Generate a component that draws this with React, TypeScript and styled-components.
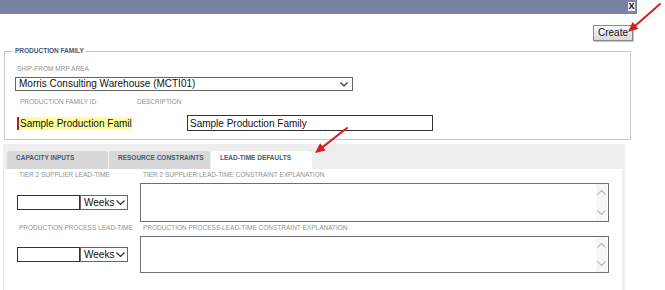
import styled, { createGlobalStyle } from "styled-components";

const GlobalStyle = createGlobalStyle`
  html, body {
    margin: 0;
    padding: 0;
    background: #fff;
  }
  * {
    box-sizing: border-box;
  }
`;

const Page = styled.div`
  position: relative;
  width: 665px;
  height: 290px;
  overflow: hidden;
  background: #fff;
  font-family: "Liberation Sans", Arial, sans-serif;
`;

const TitleBar = styled.div`
  width: 637px;
  height: 14px;
  background: #7882a4;
  display: flex;
  justify-content: flex-end;
  align-items: flex-start;
  padding: 1px 1px 0 0;
`;

const CloseBox = styled.div`
  width: 9px;
  height: 11px;
  background: #ececec;
  border: 1px solid #8a8a8a;
  color: #111;
  font-size: 9px;
  font-weight: bold;
  line-height: 9px;
  text-align: center;
`;

const Toolbar = styled.div`
  display: flex;
  justify-content: flex-end;
  padding-right: 32px;
  margin-top: 11px;
`;

const CreateButton = styled.button`
  height: 16px;
  padding: 0 4px;
  font-family: "Liberation Sans", Arial, sans-serif;
  font-size: 10px;
  line-height: 14px;
  color: #111;
  border: 1px solid #888;
  background: linear-gradient(#fbfbfb, #d9d9d9);
  box-shadow: 1px 1px 0 #c4c4c4;
`;

const Fieldset = styled.fieldset`
  margin: 6px 0 0 4px;
  width: 627px;
  border: 1px solid #c9c9c9;
  padding: 0;
  min-width: 0;
`;

const Legend = styled.legend`
  margin-left: 8px;
  padding: 0 2px;
  font-size: 6.5px;
  line-height: 8px;
  font-weight: bold;
  color: #3f5573;
`;

const FieldsetBody = styled.div`
  padding: 10px 0 8px 10px;
`;

const SmallLabel = styled.div<{ $indent?: number; $width?: number; $top?: number }>`
  font-size: 6.5px;
  line-height: 8px;
  color: #929292;
  white-space: nowrap;
  padding-left: ${(p) => p.$indent ?? 0}px;
  margin-top: ${(p) => p.$top ?? 0}px;
  width: ${(p) => (p.$width ? `${p.$width}px` : "auto")};
  flex-shrink: 0;
`;

const Combo = styled.div<{ $width: number; $height: number; $chevronRight: number }>`
  width: ${(p) => p.$width}px;
  height: ${(p) => p.$height}px;
  border: 1px solid #666;
  background: #fff;
  flex-shrink: 0;
  display: flex;
  align-items: center;
  justify-content: space-between;
  padding: 0 ${(p) => p.$chevronRight}px 0 3px;
  font-size: 10px;
  line-height: 12px;
  color: #111;
  white-space: nowrap;
`;

const ComboRow = styled.div`
  margin-top: 4px;
`;

const LabelRow = styled.div`
  display: flex;
  margin-top: 7px;
`;

const InputRow = styled.div`
  display: flex;
  align-items: center;
  margin-top: 9px;
  height: 16px;
`;

const RequiredInput = styled.input`
  margin-left: 2px;
  width: 115px;
  height: 13px;
  border: none;
  border-left: 2px solid #a3222a;
  background: #ffff99;
  padding: 0 0 0 1px;
  font-family: "Liberation Sans", Arial, sans-serif;
  font-size: 10px;
  color: #111;
  outline: none;
`;

const TextInput = styled.input<{ $width: number; $height: number; $left?: number }>`
  margin-left: ${(p) => p.$left ?? 0}px;
  width: ${(p) => p.$width}px;
  height: ${(p) => p.$height}px;
  border: 1px solid #333;
  background: #fff;
  padding: 0 0 0 2px;
  font-family: "Liberation Sans", Arial, sans-serif;
  font-size: 10px;
  color: #111;
  outline: none;
  flex-shrink: 0;
`;

const Tabs = styled.div`
  margin: 4px 0 0 3px;
  width: 622px;
`;

const TabBar = styled.div`
  height: 25px;
  background: #eeeeee;
  display: flex;
  align-items: flex-end;
  gap: 1px;
  padding-left: 4px;
`;

const Tab = styled.div<{ $active?: boolean }>`
  width: 101px;
  height: 18px;
  padding: 3px 0 0 9px;
  background: ${(p) => (p.$active ? "#fff" : "#d8d8d8")};
  border-radius: 3px 3px 0 0;
  font-size: 6.5px;
  line-height: 8px;
  font-weight: bold;
  color: #4a5a70;
  white-space: nowrap;
`;

const Panel = styled.div`
  height: 121px;
  background: #fff;
  border-left: 1px solid #e2e2e2;
  border-right: 3px solid #eeeeee;
  padding-left: 13px;
  display: grid;
  grid-template-columns: 123px 469px;
  grid-template-rows: 14px 39px 14px 37px;
`;

const FieldGroup = styled.div`
  align-self: center;
  display: flex;
`;

const NoteBox = styled.div`
  display: flex;
  border: 1px solid #6e6e6e;
  background: #fff;
`;

const NoteText = styled.textarea`
  flex: 1;
  border: none;
  resize: none;
  outline: none;
  background: transparent;
`;

const ScrollStrip = styled.div`
  width: 11px;
  margin-right: 1px;
  background: #f7f7f7;
  display: flex;
  flex-direction: column;
  justify-content: space-between;
  align-items: center;
  padding: 6px 0 6px;
`;

const Annotations = styled.svg`
  position: absolute;
  top: 0;
  left: 0;
  pointer-events: none;
`;

function Chevron({ down = true, color = "#333", w = 8 }: { down?: boolean; color?: string; w?: number }) {
  const h = w / 2;
  return (
    <svg width={w} height={h + 1} viewBox={`0 0 ${w} ${h + 1}`}>
      <polyline
        points={down ? `0.5,0.5 ${w / 2},${h} ${w - 0.5},0.5` : `0.5,${h} ${w / 2},0.5 ${w - 0.5},${h}`}
        fill="none"
        stroke={color}
        strokeWidth="1.2"
      />
    </svg>
  );
}

function WeeksSelect() {
  return (
    <Combo role="combobox" $width={48} $height={15} $chevronRight={2}>
      <span>Weeks</span>
      <Chevron w={9} />
    </Combo>
  );
}

function Note({ height }: { height: number }) {
  return (
    <NoteBox style={{ height }}>
      <NoteText />
      <ScrollStrip>
        <Chevron down={false} color="#bdbdbd" w={9} />
        <Chevron color="#bdbdbd" w={9} />
      </ScrollStrip>
    </NoteBox>
  );
}

function Arrow({ tail, tip }: { tail: [number, number]; tip: [number, number] }) {
  const dx = tip[0] - tail[0];
  const dy = tip[1] - tail[1];
  const len = Math.hypot(dx, dy);
  const ux = dx / len;
  const uy = dy / len;
  const bx = tip[0] - ux * 10;
  const by = tip[1] - uy * 10;
  const px = -uy * 4.5;
  const py = ux * 4.5;
  return (
    <g>
      <line x1={tail[0]} y1={tail[1]} x2={bx} y2={by} stroke="#d3211f" strokeWidth="2" strokeLinecap="round" />
      <polygon
        points={`${tip[0]},${tip[1]} ${bx + px},${by + py} ${bx - px},${by - py}`}
        fill="#d3211f"
      />
    </g>
  );
}

export default function App() {
  return (
    <Page>
      <GlobalStyle />
      <TitleBar>
        <CloseBox>X</CloseBox>
      </TitleBar>
      <Toolbar>
        <CreateButton>Create</CreateButton>
      </Toolbar>

      <Fieldset>
        <Legend>PRODUCTION FAMILY</Legend>
        <FieldsetBody>
          <SmallLabel $indent={2}>SHIP-FROM MRP AREA</SmallLabel>
          <ComboRow>
            <Combo role="combobox" $width={338} $height={14} $chevronRight={4}>
              <span>Morris Consulting Warehouse (MCTI01)</span>
              <Chevron w={8} />
            </Combo>
          </ComboRow>
          <LabelRow>
            <SmallLabel $indent={5} $width={122}>
              PRODUCTION FAMILY ID
            </SmallLabel>
            <SmallLabel>DESCRIPTION</SmallLabel>
          </LabelRow>
          <InputRow>
            <RequiredInput defaultValue="Sample Production Famil" />
            <TextInput $left={55} $width={246} $height={16} defaultValue="Sample Production Family" />
          </InputRow>
        </FieldsetBody>
      </Fieldset>

      <Tabs>
        <TabBar>
          <Tab>CAPACITY INPUTS</Tab>
          <Tab>RESOURCE CONSTRAINTS</Tab>
          <Tab $active>LEAD-TIME DEFAULTS</Tab>
        </TabBar>
        <Panel>
          <SmallLabel $indent={2} $top={2}>
            TIER 2 SUPPLIER LEAD-TIME
          </SmallLabel>
          <SmallLabel $indent={3} $top={2}>
            TIER 2 SUPPLIER LEAD-TIME CONSTRAINT EXPLANATION
          </SmallLabel>
          <FieldGroup>
            <TextInput $width={63} $height={15} />
            <WeeksSelect />
          </FieldGroup>
          <Note height={39} />
          <SmallLabel $indent={2} $top={2}>
            PRODUCTION PROCESS LEAD-TIME
          </SmallLabel>
          <SmallLabel $indent={3} $top={2}>
            PRODUCTION PROCESS LEAD-TIME CONSTRAINT EXPLANATION
          </SmallLabel>
          <FieldGroup>
            <TextInput $width={63} $height={15} />
            <WeeksSelect />
          </FieldGroup>
          <Note height={37} />
        </Panel>
      </Tabs>

      <Annotations width={665} height={290} viewBox="0 0 665 290">
        <Arrow tail={[660, 4]} tip={[628, 32]} />
        <Arrow tail={[347, 128]} tip={[315, 153]} />
      </Annotations>
    </Page>
  );
}
